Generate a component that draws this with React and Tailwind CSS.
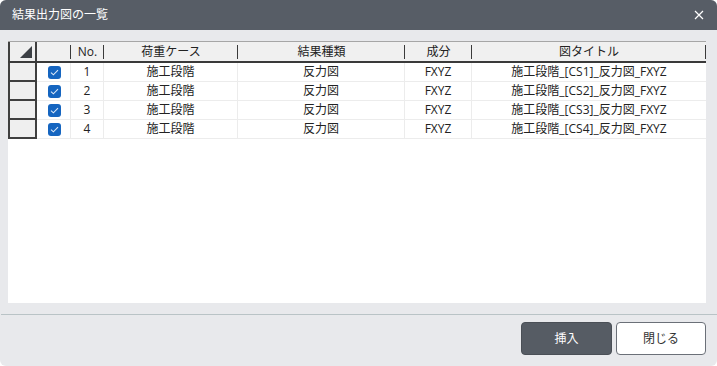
import React from "react";

const columns = [
  { key: "check", label: "", width: "w-[34px]" },
  { key: "no", label: "No.", width: "w-[33px]" },
  { key: "loadCase", label: "荷重ケース", width: "w-[134px]" },
  { key: "resultType", label: "結果種類", width: "w-[167px]" },
  { key: "component", label: "成分", width: "w-[67px]" },
  { key: "title", label: "図タイトル", width: "w-[234px]" },
];

const rows = [1, 2, 3, 4].map((n) => ({
  no: n,
  loadCase: "施工段階",
  resultType: "反力図",
  component: "FXYZ",
  title: `施工段階_[CS${n}]_反力図_FXYZ`,
}));

const CheckBox = () => (
  <div className="h-[13px] w-[13px] rounded-[3px] bg-[#1565c0] flex items-center justify-center">
    <svg width="9" height="7" viewBox="0 0 9 7" fill="none">
      <path d="M1 3.6 L3.4 5.8 L8 1.2" stroke="#dbe7f7" strokeWidth="1.1" />
    </svg>
  </div>
);

export default function App() {
  return (
    <div
      className="w-[717px] h-[366px] bg-[#e8e9ec] rounded-md overflow-hidden flex flex-col text-[#222]"
      style={{ fontFamily: '"Open Sans", "Noto Sans CJK JP", sans-serif' }}
    >
      {/* title bar */}
      <div className="h-[30px] bg-[#575d66] flex items-center justify-between pl-[12px] pr-[13px]">
        <span className="text-[12px] text-white">結果出力図の一覧</span>
        <svg width="10" height="10" viewBox="0 0 10 10">
          <path d="M1 1 L9 9 M9 1 L1 9" stroke="#ffffff" strokeWidth="1.2" />
        </svg>
      </div>

      {/* grid */}
      <div className="px-[8px] pt-[11px]">
        <div className="h-[262px] w-[698px] bg-white flex flex-col">
          {/* header */}
          <div className="h-[22px] flex bg-[#f0f0f0] border-t border-[#a6a6a6] border-b-2 border-b-[#3a3a3a]">
            <div className="w-[29px] h-full border-l-2 border-r-2 border-[#3f3f3f] relative bg-[#efefef]">
              <svg className="absolute right-[3px] bottom-[3px]" width="12" height="12" viewBox="0 0 12 12">
                <path d="M12 0 L12 12 L0 12 Z" fill="#3c4045" />
              </svg>
            </div>
            {columns.map((c) => (
              <div key={c.key} className={`${c.width} h-full flex items-center relative`}>
                <span className="flex-1 text-center text-[12px] leading-none">{c.label}</span>
                <div className="w-[1.5px] h-[14px] bg-[#3a3a3a] absolute right-0 top-[3px]" />
              </div>
            ))}
          </div>

          {/* rows */}
          {rows.map((r) => (
            <div key={r.no} className="h-[19px] flex">
              <div className="w-[29px] h-full bg-[#efefef] border-l-2 border-r-2 border-b-2 border-[#3f3f3f]" />
              <div className="w-[34px] h-full flex items-center justify-center pl-[2px] border-r border-b border-[#ececec]">
                <CheckBox />
              </div>
              <div className="w-[33px] h-full flex items-center justify-center text-[12px] border-r border-b border-[#ececec]">
                {r.no}
              </div>
              <div className="w-[134px] h-full flex items-center justify-center text-[12px] border-r border-b border-[#ececec]">
                {r.loadCase}
              </div>
              <div className="w-[167px] h-full flex items-center justify-center text-[12px] border-r border-b border-[#ececec]">
                {r.resultType}
              </div>
              <div className="w-[67px] h-full flex items-center justify-center text-[12px] border-r border-b border-[#ececec]">
                {r.component}
              </div>
              <div className="w-[234px] h-full flex items-center justify-center text-[12px] border-b border-[#ececec]">
                {r.title}
              </div>
            </div>
          ))}
        </div>
      </div>

      {/* footer */}
      <div className="mt-[11px] border-t border-[#b9c3c6] ml-[1px]" />
      <div className="flex justify-end gap-[4px] pt-[7px] pr-[11px]">
        <button className="w-[91px] h-[33px] rounded-[4px] bg-[#565c64] border border-[#4a4f56] text-white text-[12px]">
          挿入
        </button>
        <button className="w-[90px] h-[33px] rounded-[4px] bg-white border border-[#6b7078] text-[#333] text-[12px]">
          閉じる
        </button>
      </div>
    </div>
  );
}
